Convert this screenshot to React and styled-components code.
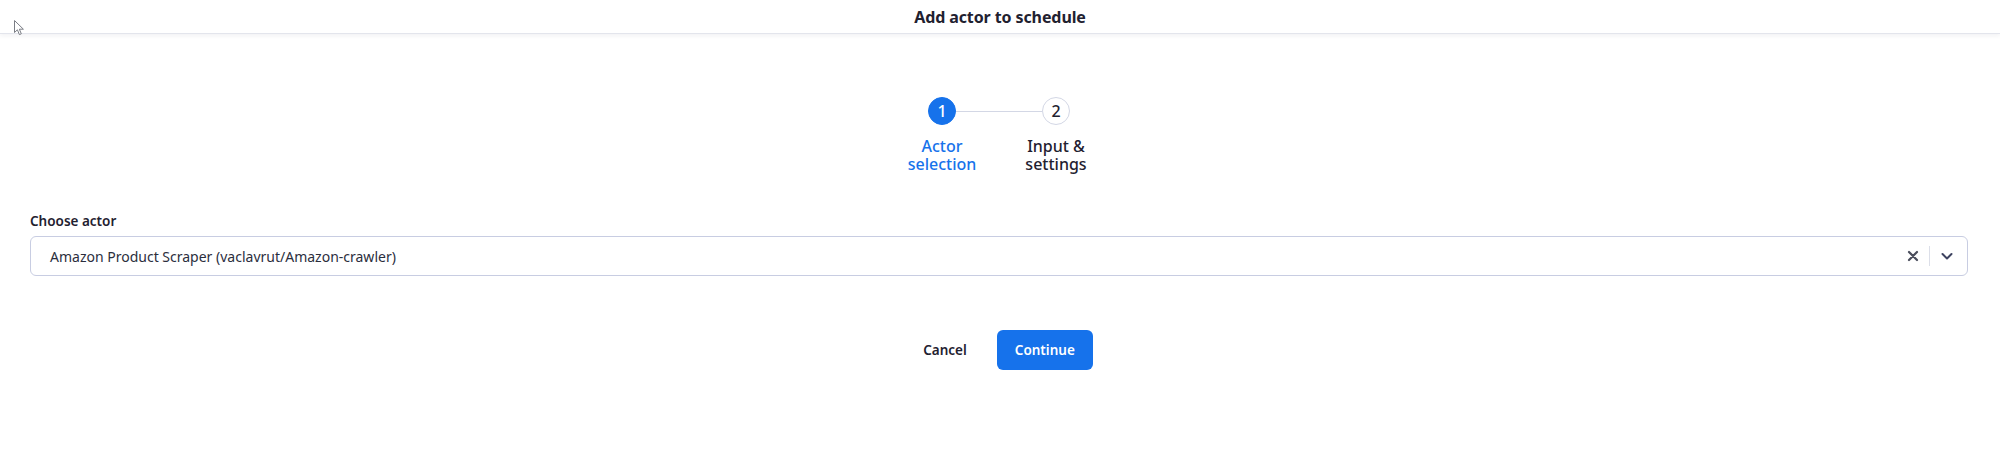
import React from 'react';
import styled, { createGlobalStyle } from 'styled-components';

const GlobalStyle = createGlobalStyle`
  body {
    margin: 0;
    background: #ffffff;
    font-family: 'Noto Sans', 'Open Sans', sans-serif;
    color: #1f2130;
  }
`;

const Page = styled.div`
  position: relative;
  width: 2000px;
  height: 473px;
  background: #fff;
`;

const Header = styled.header`
  height: 33px;
  display: flex;
  align-items: center;
  justify-content: center;
  border-bottom: 1px solid #e3e5ec;
  box-shadow: 0 2px 4px rgba(30, 35, 60, 0.06);
`;

const Title = styled.h1`
  margin: 0;
  font-size: 16px;
  font-weight: 700;
  color: #1f2130;
  letter-spacing: -0.1px;
`;

const Cursor = styled.svg`
  position: absolute;
  left: 14px;
  top: 20px;
`;

const Body = styled.main`
  padding: 63px 32px 0 30px;
`;

const Stepper = styled.div`
  display: flex;
  justify-content: center;
  align-items: flex-start;
`;

const Step = styled.div`
  width: 80px;
  display: flex;
  flex-direction: column;
  align-items: center;
`;

const Connector = styled.div`
  width: 86px;
  height: 1px;
  background: #d3d7e5;
  margin: 14px -26px 0;
`;

const Dot = styled.div`
  width: 28px;
  height: 28px;
  box-sizing: border-box;
  border-radius: 50%;
  display: flex;
  align-items: center;
  justify-content: center;
  font-size: 16px;
  font-weight: 500;
  background: ${p => (p.$active ? '#1672eb' : '#fff')};
  color: ${p => (p.$active ? '#fff' : '#1f2130')};
  border: 1.5px solid ${p => (p.$active ? '#1672eb' : '#d3d7e5')};
`;

const StepLabel = styled.div`
  margin-top: 12px;
  font-size: 16px;
  line-height: 18px;
  text-align: center;
  font-weight: 500;
  color: ${p => (p.$active ? '#1672eb' : '#1f2130')};
`;

const Field = styled.div`
  margin-top: 39px;
`;

const Label = styled.label`
  display: block;
  font-size: 13.5px;
  font-weight: 600;
  color: #1f2130;
  line-height: 18px;
  margin-bottom: 6px;
`;

const Select = styled.div`
  height: 40px;
  box-sizing: border-box;
  border: 1px solid #c8cde2;
  border-radius: 6px;
  display: flex;
  align-items: center;
  padding: 0 12px 0 19px;
`;

const Value = styled.span`
  flex: 1;
  font-size: 14px;
  color: #2b2e3d;
`;

const Controls = styled.div`
  display: flex;
  align-items: center;
  gap: 9px;
`;

const Sep = styled.span`
  width: 1px;
  height: 20px;
  background: #dcdfe9;
`;

const Actions = styled.div`
  margin-top: 54px;
  display: flex;
  justify-content: center;
  align-items: center;
  gap: 12px;
`;

const Button = styled.button`
  height: 40px;
  padding: 0 18px;
  border-radius: 6px;
  border: none;
  font-family: inherit;
  font-size: 13.5px;
  font-weight: 600;
  cursor: pointer;
  background: ${p => (p.$primary ? '#1672eb' : 'transparent')};
  color: ${p => (p.$primary ? '#fff' : '#1f2130')};
`;

export default function App() {
  return (
    <Page>
      <GlobalStyle />
      <Header>
        <Title>Add actor to schedule</Title>
      </Header>
      <Cursor width="12" height="16" viewBox="0 0 12 16">
        <path
          d="M0.5 0.5 L0.5 12.5 L3.4 9.8 L5.4 14.6 L7.3 13.8 L5.4 9.2 L9.4 9.2 Z"
          fill="#fff"
          stroke="#7a7d85"
          strokeWidth="1"
          strokeLinejoin="round"
        />
      </Cursor>
      <Body>
        <Stepper>
          <Step>
            <Dot $active>1</Dot>
            <StepLabel $active>Actor<br />selection</StepLabel>
          </Step>
          <Connector />
          <Step>
            <Dot>2</Dot>
            <StepLabel>Input &amp;<br />settings</StepLabel>
          </Step>
        </Stepper>
        <Field>
          <Label>Choose actor</Label>
          <Select>
            <Value>Amazon Product Scraper (vaclavrut/Amazon-crawler)</Value>
            <Controls>
              <svg width="14" height="14" viewBox="0 0 14 14">
                <path d="M3 3 L11 11 M11 3 L3 11" stroke="#4b4e5c" strokeWidth="2.2" strokeLinecap="round" />
              </svg>
              <Sep />
              <svg width="16" height="16" viewBox="0 0 16 16">
                <path d="M3.5 6 L8 10.5 L12.5 6" fill="none" stroke="#3d4260" strokeWidth="2" strokeLinecap="round" strokeLinejoin="round" />
              </svg>
            </Controls>
          </Select>
        </Field>
        <Actions>
          <Button>Cancel</Button>
          <Button $primary>Continue</Button>
        </Actions>
      </Body>
    </Page>
  );
}
